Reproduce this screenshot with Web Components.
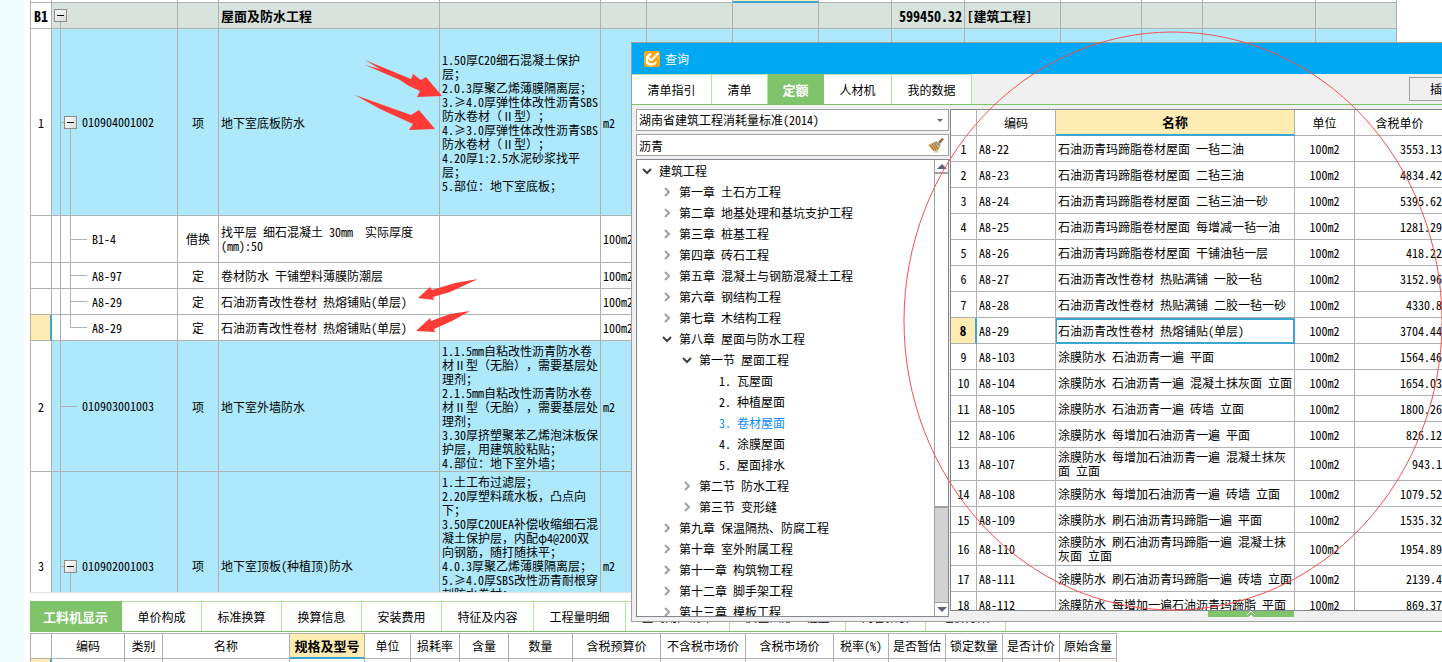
<!DOCTYPE html>
<html lang="zh-CN">
<head>
<meta charset="utf-8">
<title>工程计价</title>
<style>
html, body { height: 100%; margin: 0; }
body {
  overflow: hidden; background: #fff; color: #000;
  font: 12px/14px "Noto Sans Mono CJK SC", "Noto Sans CJK SC", "Liberation Mono", monospace;
  text-spacing-trim: space-all;
  --line: #b0b0b0; --green: #7fc36b; --pale-green: #b5e3a0; --focus: #ffecb3; --blue: #3ba6d3;
}
</style>
</head>
<body>
<budget-app></budget-app>
<script>
const define = (name, html, setup) => {
  const tpl = document.createElement('template');
  tpl.innerHTML = html;
  customElements.define(name, class extends HTMLElement {
    constructor() {
      super();
      this.attachShadow({ mode: 'open' }).append(tpl.content.cloneNode(true));
    }
    connectedCallback() {
      if (setup && !this.ready) { this.ready = true; setup(this, this.shadowRoot); }
    }
  });
};

const tableCss = `
  table { border-collapse: separate; border-spacing: 0; table-layout: fixed; }
  td, th { box-sizing: border-box; padding: 0; border: 0 solid var(--line); border-width: 0 1px 1px 0;
    white-space: pre; overflow: hidden; vertical-align: middle; font-weight: normal; text-align: left; }
  .c { text-align: center; }
`;
const cols = list => '<colgroup>' + list.map(w => `<col style="width:${w}px">`).join('') + '</colgroup>';
const sum = list => list.reduce((a, b) => a + b, 0);

/* Tab strip: labels come from the attribute, the selected one is marked */
define('tab-strip', `
<style>
  :host { display: flex; height: 31px; box-sizing: border-box; border-bottom: 1px solid var(--green); }
  button { flex: none; box-sizing: border-box; width: calc(var(--n) * 12px + 32px); padding: 0; margin: 0; font: inherit;
    color: #000; background: #fff; border: 0 solid var(--pale-green); border-width: 1px 1px 0 0; }
  button[aria-selected=true] { background: var(--green); border-color: var(--green); color: #fff; font-weight: bold; font-size: 13px; }
</style>
<slot></slot>`, (el, root) => {
  const current = Number(el.getAttribute('selected'));
  el.setAttribute('role', 'tablist');
  el.getAttribute('labels').split(',').forEach((t, i) => {
    const b = document.createElement('button');
    b.type = 'button'; b.setAttribute('role', 'tab');
    b.setAttribute('aria-selected', i === current);
    b.style.setProperty('--n', t.length);
    b.textContent = t;
    root.insertBefore(b, root.querySelector('slot'));
  });
});

/* Bill of quantities */
const billCols = [22, 126, 41, 221, 161, 46, 86, 86, 73, 73, 96, 81, 61, 113, 81];
const bill = [
  { h: 187, no: '1', code: '010904001002', kind: 'item', tree: 'open', type: '项', name: '地下室底板防水', unit: 'm2',
    desc: '1.50厚C20细石混凝土保护\n层；\n2.0.3厚聚乙烯薄膜隔离层；\n3.≥4.0厚弹性体改性沥青SBS\n防水卷材（Ⅱ型）；\n4.≥3.0厚弹性体改性沥青SBS\n防水卷材（Ⅱ型）；\n4.20厚1:2.5水泥砂浆找平\n层；\n5.部位：地下室底板；' },
  { h: 47, code: 'B1-4', tree: 'child', type: '借换', name: '找平层 细石混凝土 30mm  实际厚度\n(mm):50', unit: '100m2' },
  { h: 26, code: 'A8-97', tree: 'child', type: '定', name: '卷材防水 干铺塑料薄膜防潮层', unit: '100m2' },
  { h: 26, code: 'A8-29', tree: 'child', type: '定', name: '石油沥青改性卷材 热熔铺贴(单层)', unit: '100m2' },
  { h: 26, code: 'A8-29', tree: 'child last', type: '定', name: '石油沥青改性卷材 热熔铺贴(单层)', unit: '100m2', current: true },
  { h: 131, no: '2', code: '010903001003', kind: 'item', tree: 'leaf', type: '项', name: '地下室外墙防水', unit: 'm2',
    desc: '1.1.5mm自粘改性沥青防水卷\n材Ⅱ型（无胎），需要基层处\n理剂；\n2.1.5mm自粘改性沥青防水卷\n材Ⅱ型（无胎），需要基层处\n理剂；\n3.30厚挤塑聚苯乙烯泡沫板保\n护层，用建筑胶粘贴；\n4.部位：地下室外墙；' },
  { h: 189, no: '3', code: '010902001003', kind: 'item long', tree: 'open', type: '项', name: '地下室顶板(种植顶)防水', unit: 'm2',
    desc: '1.土工布过滤层；\n2.20厚塑料疏水板，凸点向\n下；\n3.50厚C20UEA补偿收缩细石混\n凝土保护层，内配φ4@200双\n向钢筋，随打随抹平；\n4.0.3厚聚乙烯薄膜隔离层；\n5.≥4.0厚SBS改性沥青耐根穿\n刺防水卷材；' }
];
define('bill-grid', `
<style>
  ${tableCss}
  :host { display: block; flex: 1 1 0; min-height: 0; overflow: hidden; border-bottom: 1px solid #e3e3e3; }
  td { padding-left: 2px; }
  td:first-child, td.c { padding-left: 0; }
  td:first-child { border-left-width: 1px; text-align: center; }
  .summary td { background-color: #d9e3de; font-weight: bold; font-size: 13px; }
  .summary td:first-child { background-color: #fff; font-size: 14px; }
  .item td:not(:first-child) { background-color: #ade8fb; }
  .item:not(.long) td:not(.code) { padding-top: 2px; }
  .long td:nth-child(5) { vertical-align: top; padding-top: 3px; }
  .focus { background: var(--focus); border-bottom: 2px solid var(--blue); }
  .current td:first-child { background: var(--focus); border-right: 2px solid var(--blue); }
  .summary .num { text-align: right; padding-right: 2px; font-size: 14px; }
  .code { padding: 0; --v: linear-gradient(var(--line), var(--line)); background-repeat: no-repeat; }
  .code div { display: flex; align-items: center; gap: 5px; }
  .code button { flex: none; width: 13px; height: 13px; padding: 0; border: 1px solid #8c8c8c; display: grid; place-items: center;
    background: linear-gradient(135deg, #fff, #d8d8d8); }
  .code button::before { content: ""; width: 7px; height: 1px; background: #000; }
  .root { background-image: var(--v); background-size: 1px 7px; background-position: 8px 100%; }
  .root div { padding-left: 2px; }
  .open { background-image: var(--v), var(--v), var(--v);
    background-size: 1px 100%, 5px 1px, 1px 50%; background-position: 8px 0, 8px 50%, 18px 100%; }
  .open div { padding-left: 12px; }
  .child { background-image: var(--v), var(--v), var(--v);
    background-size: 1px 100%, 17px 1px, 1px 100%; background-position: 8px 0, 18px 50%, 18px 0; }
  .last { background-size: 1px 100%, 17px 1px, 1px 50%; }
  .child div { padding-left: 40px; }
  .leaf { background-image: var(--v), var(--v); background-size: 1px 100%, 17px 1px; background-position: 8px 0, 8px 50%; }
  .leaf div { padding-left: 30px; }
</style>
<table></table>`, (el, root) => {
  const t = root.querySelector('table');
  t.style.width = sum(billCols) + 'px';
  const blanks = n => '<td></td>'.repeat(n);
  const box = '<button type="button" aria-label="折叠"></button>';
  t.innerHTML = cols(billCols) + '<tbody>' +
    `<tr style="height:3px">${blanks(7)}<td class="focus"></td>${blanks(7)}</tr>` +
    `<tr class="summary" style="height:26px"><td>B1</td><td class="code root"><div>${box}</div></td><td></td><td>屋面及防水工程</td>` +
    `${blanks(5)}<td class="num">599450.32</td><td>[建筑工程]</td>${blanks(4)}</tr>` +
    bill.map(r => `<tr class="${r.kind || ''} ${r.current ? 'current' : ''}" style="height:${r.h}px"><td>${r.no || ''}</td>` +
      `<td class="code ${r.tree}"><div>${r.tree === 'open' ? box : ''}<span>${r.code}</span></div></td>` +
      `<td class="c">${r.type}</td><td>${r.name}</td><td>${r.desc || ''}</td><td>${r.unit}</td>${blanks(9)}</tr>`).join('') +
    '</tbody>';
});

/* Labour, material and machine list under the bill */
const resCols = [22, 73, 38, 127, 75, 46, 49, 49, 64, 88, 85, 88, 55, 57, 57, 57, 57];
const resHeads = ['', '编码', '类别', '名称', '规格及型号', '单位', '损耗率', '含量', '数量', '含税预算价', '不含税市场价', '含税市场价', '税率(%)', '是否暂估', '锁定数量', '是否计价', '原始含量'];
define('resource-grid', `
<style>
  ${tableCss}
  :host { display: block; flex: none; height: 29px; overflow: hidden; }
  table { border-top: 1px solid var(--line); }
  th { text-align: center; }
  th:first-child, td:first-child { border-left-width: 1px; }
  th:nth-child(5) { background: var(--focus); border-bottom: 2px solid var(--blue); font-weight: bold; font-size: 13px; }
  td:first-child { background: var(--focus); border-right: 2px solid var(--blue); }
  td:last-child { background: #fffdf6; }
</style>
<table></table>`, (el, root) => {
  const t = root.querySelector('table');
  t.style.width = sum(resCols) + 'px';
  t.innerHTML = cols(resCols) + '<thead><tr style="height:25px">' + resHeads.map(h => `<th scope="col">${h}</th>`).join('') +
    '</tr></thead><tbody><tr style="height:26px">' + '<td></td>'.repeat(resCols.length) + '</tr></tbody>';
});

/* Chapter tree: depth, state (closed, open, none), label */
const nodes = [
  [0, 'o', '建筑工程'], [1, 'c', '第一章 土石方工程'], [1, 'c', '第二章 地基处理和基坑支护工程'], [1, 'c', '第三章 桩基工程'],
  [1, 'c', '第四章 砖石工程'], [1, 'c', '第五章 混凝土与钢筋混凝土工程'], [1, 'c', '第六章 钢结构工程'], [1, 'c', '第七章 木结构工程'],
  [1, 'o', '第八章 屋面与防水工程'], [2, 'o', '第一节 屋面工程'], [3, '', '1. 瓦屋面'], [3, '', '2. 种植屋面'], [3, 's', '3. 卷材屋面'],
  [3, '', '4. 涂膜屋面'], [3, '', '5. 屋面排水'], [2, 'c', '第二节 防水工程'], [2, 'c', '第三节 变形缝'],
  [1, 'c', '第九章 保温隔热、防腐工程'], [1, 'c', '第十章 室外附属工程'], [1, 'c', '第十一章 构筑物工程'], [1, 'c', '第十二章 脚手架工程'], [1, 'c', '第十三章 模板工程']
];
define('chapter-tree', `
<style>
  :host { display: flex; flex: 1 1 0; min-height: 0; box-sizing: border-box; border: 1px solid #828790; background: #fff; overflow: hidden; }
  ul { flex: 1; min-width: 0; margin: 0; padding: 0 0 0 4px; list-style: none; overflow: hidden; }
  li { display: flex; align-items: center; height: 21px; padding-left: calc(var(--d) * 20px); white-space: pre; }
  li button, li i { flex: none; width: 12px; height: 12px; margin-right: 6px; padding: 0; border: 0; background: none; display: grid; place-items: center; }
  li svg { fill: none; stroke: #a0a0a0; stroke-width: 2; }
  li .o { stroke: #404040; }
  .s { color: #0a8cff; }
  .bar { flex: none; width: 13px; display: flex; flex-direction: column; background: #d3d3d3; border-left: 1px solid #a0a0a0; }
  .bar button { flex: none; height: 14px; padding: 0; border: 0 solid #a0a0a0; background: #fff; display: grid; place-items: center; }
  .bar .up { border-bottom-width: 2px; }
  .bar .down { border-top-width: 1px; }
  .thumb { flex: 332; background: #fff; border-bottom: 2px solid #a0a0a0; }
  .track { flex: 94; }
  .bar svg { fill: #5f6673; }
</style>
<ul role="tree"></ul>
<div class="bar">
  <button class="up" type="button" aria-label="向上"><svg width="10" height="5"><path d="M0 5L5 0L10 5Z"/></svg></button>
  <div class="thumb"></div><div class="track"></div>
  <button class="down" type="button" aria-label="向下"><svg width="10" height="5"><path d="M0 0L5 5L10 0Z"/></svg></button>
</div>`, (el, root) => {
  const icon = {
    c: '<button type="button" aria-label="展开"><svg width="10" height="10"><path d="M3 1L7 5L3 9"/></svg></button>',
    o: '<button type="button" aria-label="折叠"><svg class="o" width="10" height="10"><path d="M1 3L5 7L9 3"/></svg></button>'
  };
  root.querySelector('ul').innerHTML = nodes.map(([d, s, t]) =>
    `<li role="treeitem" class="${s === 's' ? 's' : ''}" style="--d:${d}">${icon[s] || '<i></i>'}<span>${t}</span></li>`).join('');
});

/* Quota list */
const quotaCols = [26, 79, 239, 60, 90];
const quotas = [
  ['A8-22', '石油沥青玛蹄脂卷材屋面 一毡二油', '3553.13'], ['A8-23', '石油沥青玛蹄脂卷材屋面 二毡三油', '4834.42'],
  ['A8-24', '石油沥青玛蹄脂卷材屋面 二毡三油一砂', '5395.62'], ['A8-25', '石油沥青玛蹄脂卷材屋面 每增减一毡一油', '1281.29'],
  ['A8-26', '石油沥青玛蹄脂卷材屋面 干铺油毡一层', '418.22'], ['A8-27', '石油沥青改性卷材 热贴满铺 一胶一毡', '3152.96'],
  ['A8-28', '石油沥青改性卷材 热贴满铺 二胶一毡一砂', '4330.8'], ['A8-29', '石油沥青改性卷材 热熔铺贴(单层)', '3704.44'],
  ['A8-103', '涂膜防水 石油沥青一遍 平面', '1564.46'], ['A8-104', '涂膜防水 石油沥青一遍 混凝土抹灰面 立面', '1654.03'],
  ['A8-105', '涂膜防水 石油沥青一遍 砖墙 立面', '1800.26'], ['A8-106', '涂膜防水 每增加石油沥青一遍 平面', '826.12'],
  ['A8-107', '涂膜防水 每增加石油沥青一遍 混凝土抹灰\n面 立面', '943.1'], ['A8-108', '涂膜防水 每增加石油沥青一遍 砖墙 立面', '1079.52'],
  ['A8-109', '涂膜防水 刷石油沥青玛蹄脂一遍 平面', '1535.32'], ['A8-110', '涂膜防水 刷石油沥青玛蹄脂一遍 混凝土抹\n灰面 立面', '1954.89'],
  ['A8-111', '涂膜防水 刷石油沥青玛蹄脂一遍 砖墙 立面', '2139.4'], ['A8-112', '涂膜防水 每增加一遍石油沥青玛蹄脂 平面', '869.37']
];
define('quota-grid', `
<style>
  ${tableCss}
  :host { display: block; flex: 1 1 0; min-height: 0; box-sizing: border-box; overflow: hidden; background: #fff;
    border: 1px solid #828790; border-right: 0; }
  th { text-align: center; }
  td { padding-left: 2px; }
  td.c { padding-left: 0; }
  .num { text-align: right; padding: 0 2px 0 0; }
  th:nth-child(3) { background: var(--focus); border-bottom: 2px solid var(--blue); font-weight: bold; font-size: 13px; }
  .on td:first-child { background: var(--focus); border-right: 2px solid var(--blue); font-weight: bold; font-size: 13px; }
  .on td:nth-child(3) { box-shadow: inset 1px 2px 0 0 var(--blue), inset -1px -1px 0 0 var(--blue); border-color: var(--blue); }
</style>
<table></table>`, (el, root) => {
  const t = root.querySelector('table');
  t.style.width = sum(quotaCols) + 'px';
  t.innerHTML = cols(quotaCols) + '<thead><tr style="height:26px"><th></th><th scope="col">编码</th><th scope="col">名称</th><th scope="col">单位</th><th scope="col">含税单价</th></tr></thead><tbody>' +
    quotas.map(([code, name, price], i) => `<tr class="${i === 7 ? 'on' : ''}" style="height:${name.includes('\n') ? 33 : 26}px">` +
      `<td class="c">${i + 1}</td><td>${code}</td><td>${name}</td><td class="c">100m2</td><td class="num">${price}</td></tr>`).join('') + '</tbody>';
});

/* Query window */
define('query-dialog', `
<style>
  :host { display: flex; flex-direction: column; box-sizing: border-box; border: 1px solid #a0a0a0; background: #f0f0f0; overflow: hidden; }
  header { flex: none; height: 31px; display: flex; align-items: center; gap: 5px; padding-left: 12px; background: #00a8f3; color: #fff; }
  tab-strip { flex: none; }
  .insert { margin: 3px 8px 3px auto; padding: 0 20px; font: inherit; color: #000; background: #f0f0f0; border: 1px solid #a0a0a0; }
  main { flex: 1; min-height: 0; display: flex; gap: 1px; padding: 4px 0 4px 4px; }
  .left { flex: none; width: 313px; display: flex; flex-direction: column; gap: 3px; }
  .field { flex: none; display: flex; align-items: center; height: 22px; box-sizing: border-box; border: 1px solid #a0a0a0; background: #fff; padding: 0 4px 0 2px; }
  select, input { flex: 1; min-width: 0; appearance: none; border: 0; padding: 0; margin: 0; outline: 0; background: none; font: inherit; color: #000; height: 18px; }
  .field button { flex: none; width: 16px; height: 16px; padding: 0; border: 0; background: none; }
  .field svg { display: block; }
  .arrow { margin-right: 1px; fill: #5f6673; }
  .right { flex: 1; min-width: 0; display: flex; flex-direction: column; }
  .handle { flex: none; display: block; width: 86px; height: 6px; margin-left: 258px; padding: 0; border: 0; background: var(--green); }
  .handle svg { display: block; margin: auto; fill: none; stroke: #fff; }
</style>
<header>
  <svg width="16" height="16" viewBox="0 0 16 16"><rect width="16" height="16" rx="2" fill="#faa51a"/>
    <path d="M2 5L6 2L8 3L5 6L7 8L14 1L15 3L8 10L6 10L4 8L4 10Q5 13 9 12L13 10L12 13Q8 16 4 14Q1 12 2 8Z" fill="#fff"/><path d="M12 5L15 8" stroke="#ffd98a"/></svg>
  <span>查询</span>
</header>
<tab-strip labels="清单指引,清单,定额,人材机,我的数据" selected="2"><button class="insert" type="button">插入</button></tab-strip>
<main>
  <div class="left">
    <div class="field"><select aria-label="定额库"><option>湖南省建筑工程消耗量标准(2014)</option></select>
      <svg class="arrow" width="6" height="3"><path d="M0 0H6L3 3Z"/></svg></div>
    <div class="field"><input aria-label="查找" value="沥青">
      <button type="button" aria-label="清除"><svg width="16" height="16" viewBox="0 0 16 16">
        <path d="M10 5L14 1L16 2L12 7Z" fill="#a5652c"/><path d="M8 4L13 8L11 10L6 6Z" fill="#8c98a0"/>
        <path d="M6 5L12 10L9 15L5 14L0 8Z" fill="#d9ae6a"/><path d="M2 8L6 13M4 7L8 13M6 6L10 12" stroke="#7f5a24" stroke-width=".8"/><path d="M5 15H11" stroke="#d0d0d0"/></svg></button></div>
    <chapter-tree></chapter-tree>
  </div>
  <div class="right">
    <quota-grid></quota-grid>
    <button class="handle" type="button" aria-label="展开"><svg width="10" height="6"><path d="M1 4L5 0L9 4"/><path d="M3 6L5 4L7 6Z" fill="#fff"/></svg></button>
  </div>
</main>`);

/* Hand-drawn red marks laid over the windows */
define('review-marks', `
<style>
  :host { display: block; pointer-events: none; }
  svg { display: block; width: 1442px; height: 662px; }
</style>
<svg viewBox="0 0 1442 662" aria-hidden="true">
  <g fill="#ff3b37">
    <path d="M365 60L411 79L413 74L421 80L426 77L442 96L417 97L420 91L409 86L400 80L365 65L380 69Z"/>
    <path d="M355 95L411 115L419 110L435 129L409 130L413 124L380 109Z"/>
    <path d="M478 279L455 283L432 290L430 287L418 298L434 300L433 297L450 292Z"/>
    <path d="M470 311L450 314L431 321L430 318L416 331L435 332L434 329L452 321Z"/>
  </g>
  <ellipse cx="1173" cy="321" rx="269" ry="289" fill="none" stroke="#f8504c"/>
</svg>`);

define('budget-app', `
<style>
  :host { display: flex; position: relative; height: 100vh; overflow: hidden; }
  .rail { flex: none; width: 24px; background: #f0fdff; }
  .work { flex: 1; min-width: 0; display: flex; flex-direction: column; padding-left: 6px; }
  .work tab-strip { flex: none; margin: 8px 0 1px; }
  query-dialog { position: absolute; top: 42px; bottom: 40px; left: 631px; right: -42px; }
  review-marks { position: absolute; top: 0; left: 0; }
</style>
<div class="rail"></div>
<div class="work">
  <bill-grid></bill-grid>
  <tab-strip labels="工料机显示,单价构成,标准换算,换算信息,安装费用,特征及内容,工程量明细,查询用户清单,反查图形工程量,内容指引,组价方案" selected="0"></tab-strip>
  <resource-grid></resource-grid>
</div>
<query-dialog></query-dialog>
<review-marks></review-marks>`);
</script>
</body>
</html>
